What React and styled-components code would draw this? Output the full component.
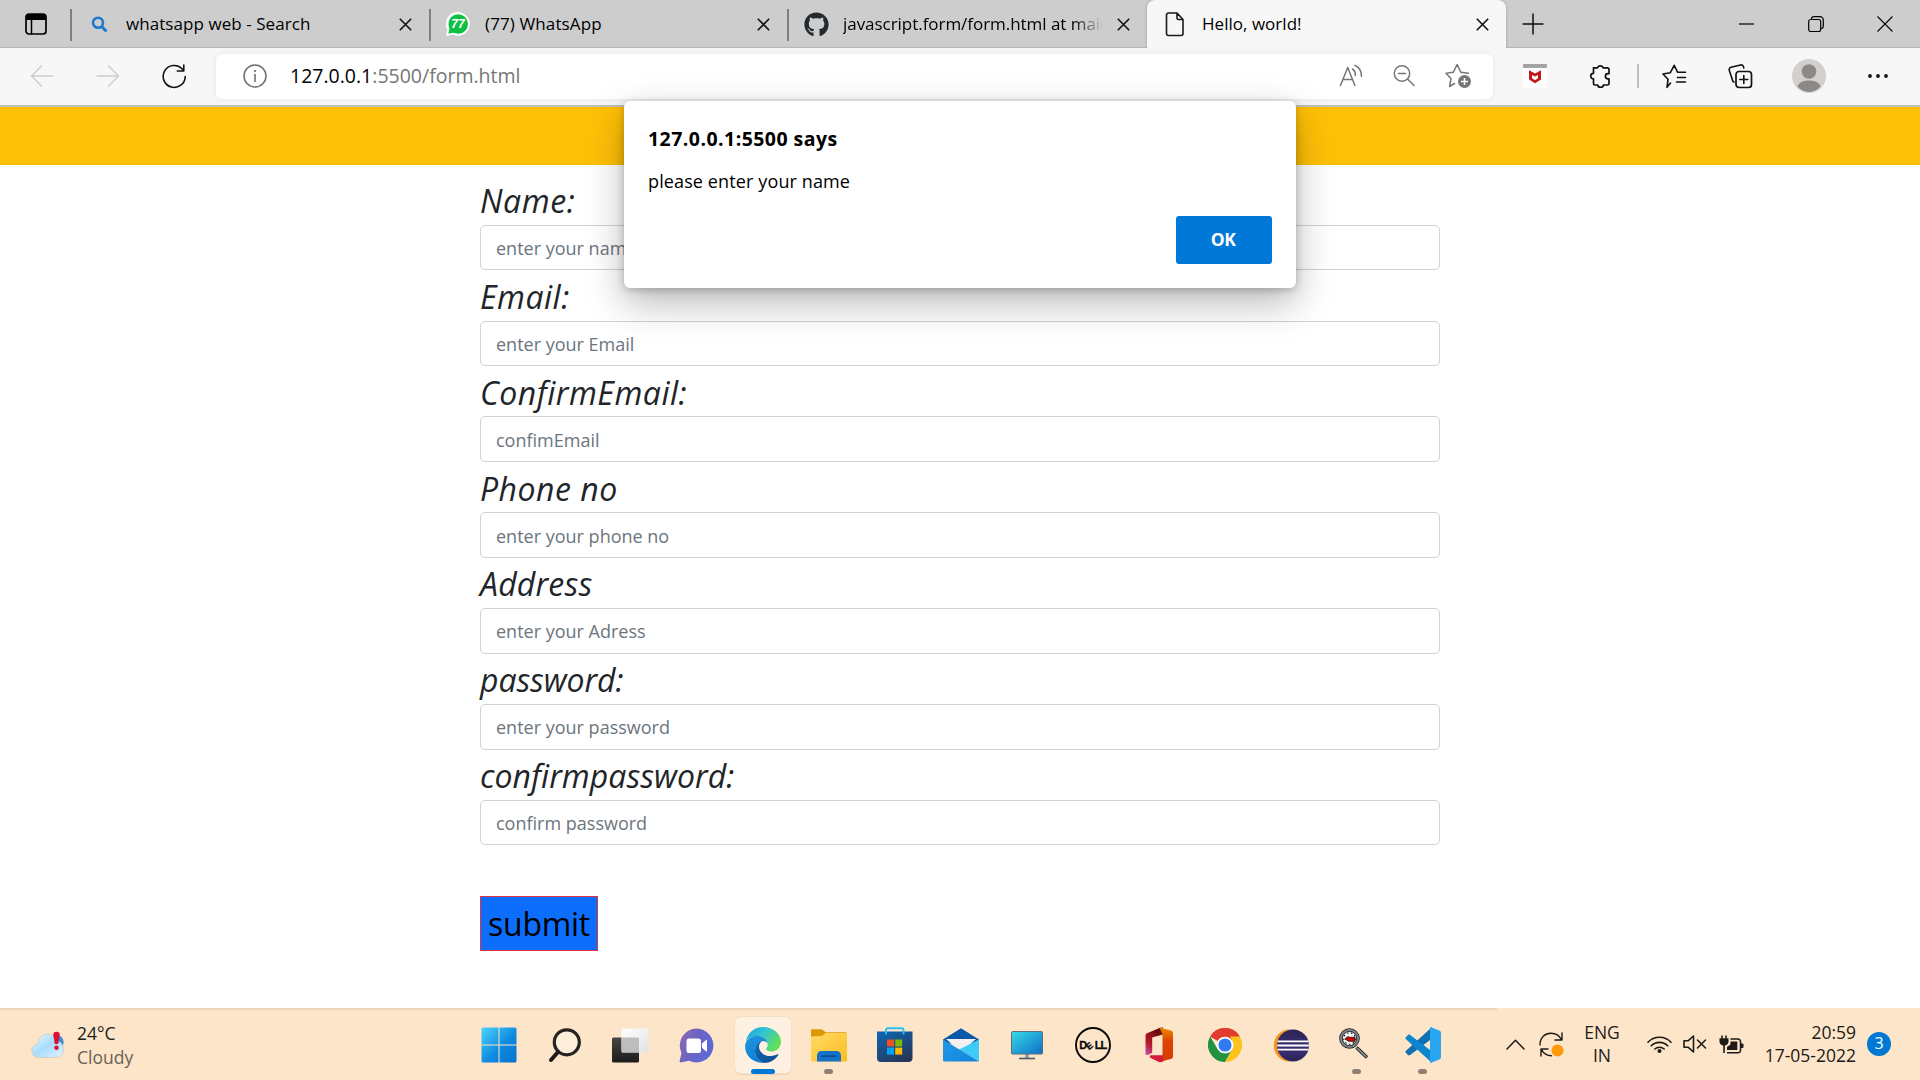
import React from "react";
import styled, { createGlobalStyle, css } from "styled-components";
import { FaGithub } from "react-icons/fa";

const UI = `"Open Sans", "Noto Sans", sans-serif`;

const GlobalStyle = createGlobalStyle`
  *, *::before, *::after { box-sizing: border-box; }
  body { margin: 0; background: #fff; font-family: ${UI}; color: #000; overflow: hidden; }
  svg { display: block; flex: none; }
`;

const Screen = styled.div`
  width: 1920px;
  height: 1080px;
  display: flex;
  flex-direction: column;
  overflow: hidden;
`;

/* ---------- tab strip ---------- */
const TabStrip = styled.header`
  height: 48px;
  flex: none;
  display: flex;
  background: #cdcdcd;
  box-shadow: inset 0 -2px 1px -1px #b4b4b4;
`;
const TabActions = styled.div`
  width: 70px;
  display: flex;
  align-items: center;
  padding-left: 25px;
`;
const Tab = styled.div`
  width: ${(p) => p.$width}px;
  height: 48px;
  display: flex;
  align-items: center;
  padding: 0 12px 0 15px;
  border-left: 1px solid transparent;
  ${(p) =>
    p.$active
      ? css`
          background: #f7f7f7;
          border-radius: 8px 8px 0 0;
          box-shadow: 0 0 3px rgba(0, 0, 0, 0.25);
          clip-path: inset(0 -4px 0 -4px);
        `
      : css`
          border-image: linear-gradient(transparent 10px, #7f7f7f 10px, #7f7f7f 40px, transparent 40px) 1;
          border-width: 0 0 0 2px;
          border-style: solid;
        `}
`;
const TabIcon = styled.span`
  width: 24px;
  height: 24px;
  display: grid;
  place-items: center;
`;
const TabTitle = styled.span`
  flex: 1;
  margin-left: 15px;
  padding-bottom: 1px;
  font-size: 17px;
  line-height: 24px;
  letter-spacing: ${(p) => p.$ls || 0}px;
  white-space: nowrap;
  overflow: hidden;
  margin-right: 8px;
  ${(p) => p.$fade && css`mask-image: linear-gradient(90deg, #000 calc(100% - 30px), transparent);`}
`;
const CloseButton = styled.button`
  width: 24px;
  height: 24px;
  padding: 1px 0 0;
  border: 0;
  background: none;
  display: grid;
  place-items: center;
`;
const NewTab = styled.div`
  width: 54px;
  display: grid;
  place-items: center;
`;
const WindowControls = styled.div`
  margin-left: auto;
  display: flex;
  padding-right: 1px;
`;
const WindowButton = styled.div`
  width: 69px;
  display: grid;
  place-items: center;
  padding-bottom: 1px;
`;

/* ---------- toolbar ---------- */
const Toolbar = styled.div`
  height: 59px;
  flex: none;
  display: flex;
  align-items: center;
  padding: 1px 6px 2px 30px;
  background: #f7f7f7;
  border-bottom: 2px solid #bdbdbd;
`;
const NavButtons = styled.div`
  display: flex;
  gap: 42px;
  margin-right: 29px;
`;
const AddressBar = styled.div`
  width: 1277px;
  height: 45px;
  display: flex;
  align-items: center;
  padding: 0 8px 0 27px;
  background: #fff;
  border-radius: 6px;
  box-shadow: 0 0 6px rgba(0, 0, 0, 0.07);
`;
const Url = styled.span`
  flex: 1;
  margin-left: 23px;
  font-size: 19.5px;
  line-height: 28px;
  color: #767676;
  white-space: nowrap;
  b { font-weight: 400; color: #000; }
`;
const AddressAction = styled.span`
  width: 53.7px;
  display: grid;
  place-items: center;
`;
const ToolbarActions = styled.div`
  display: flex;
  align-items: center;
  margin-left: 9px;
`;
const ToolbarAction = styled.span`
  width: ${(p) => p.$w || 66}px;
  display: grid;
  place-items: center;
`;
const ToolbarDivider = styled.i`
  width: 2px;
  height: 24px;
  background: #bdbdbd;
  margin: 0 2px 0 3px;
`;

/* ---------- page ---------- */
const Page = styled.main`
  flex: 1;
  background: #fff;
`;
const Banner = styled.div`
  height: 58px;
  background: #ffc107;
`;
const Form = styled.form`
  width: 960px;
  margin: 0 auto;
  padding-top: 9.64px;
`;
const Field = styled.div`
  height: 95.84px;
`;
const Label = styled.label`
  display: block;
  height: 50.16px;
  padding-top: 1.5px;
  font: italic 400 32px/50px ${UI};
  letter-spacing: ${(p) => p.$ls || 0}px;
  color: #212529;
`;
const Input = styled.input`
  display: block;
  width: 100%;
  height: 45.68px;
  padding: 1px 14px 0 15px;
  border: 1px solid #ced4da;
  border-radius: 5px;
  outline: 0;
  font: 400 18px/28px ${UI};
  &::placeholder { color: #6c757d; opacity: 1; }
`;
const Submit = styled.button`
  display: block;
  width: 118px;
  height: 55px;
  margin-top: 50.5px;
  padding: 2px 0 0;
  border: 1px solid #dc3545;
  background: #0d6efd;
  font: 400 32px/50px ${UI};
  letter-spacing: -0.3px;
  color: #000;
`;

/* ---------- alert ---------- */
const Dialog = styled.section`
  position: absolute;
  left: 624px;
  top: 101px;
  width: 672px;
  height: 187px;
  display: flex;
  flex-direction: column;
  padding: 24px 24px 24px 24px;
  background: #fff;
  border-radius: 6px;
  box-shadow: 0 15px 38px rgba(0, 0, 0, 0.28), 0 2px 8px rgba(0, 0, 0, 0.22);
`;
const DialogTitle = styled.h1`
  margin: 0 0 14px;
  font-size: 19.5px;
  font-weight: 700;
  line-height: 28px;
  letter-spacing: 0.45px;
`;
const DialogText = styled.p`
  margin: 0;
  font-size: 18px;
  line-height: 28px;
  letter-spacing: 0.12px;
`;
const DialogButton = styled.button`
  align-self: flex-end;
  margin-top: auto;
  width: 96px;
  height: 48px;
  padding: 0 2px 2px 0;
  border: 0;
  border-radius: 3px;
  background: #0078d7;
  color: #fff;
  font: 700 17.5px/24px ${UI};
  letter-spacing: -0.6px;
`;

/* ---------- taskbar ---------- */
const Taskbar = styled.footer`
  height: 72px;
  flex: none;
  display: flex;
  background: linear-gradient(90deg, #ecd5bb 1497px, transparent 1497px) 0 0 / 100% 2px no-repeat #fde5c9;
`;
const Weather = styled.div`
  width: 465.5px;
  display: flex;
  align-items: center;
  gap: 12px;
  padding: 2px 0 0 31px;
`;
const WeatherText = styled.div`
  font-size: 17.5px;
  line-height: 24px;
  color: #201d19;
`;
const Line = styled.div`
  letter-spacing: ${(p) => p.$ls || 0}px;
  color: ${(p) => p.$color || "inherit"};
`;
const Apps = styled.div`
  display: flex;
`;
const AppCell = styled.div`
  width: 66px;
  height: 72px;
  display: flex;
  flex-direction: column;
  align-items: center;
  padding-top: 9px;
`;
const AppTile = styled.div`
  width: 56px;
  height: 56px;
  display: grid;
  place-items: center;
  border-radius: 6px;
  ${(p) => p.$nudge && css`padding: ${p.$nudge};`}
  ${(p) => p.$active && css`
    background: #fef1e2;
    box-shadow: 0 0 0 1px #f6dfc5, 0 2px 0 #ecd4b8;
  `}
`;
const Indicator = styled.i`
  width: ${(p) => (p.$active ? 24 : 9)}px;
  height: 5px;
  margin-top: -4px;
  border-radius: 3px;
  background: ${(p) => (p.$active ? "#0078d4" : "#8e8172")};
  z-index: 1;
`;
const Tray = styled.div`
  margin-left: auto;
  display: flex;
  align-items: center;
  color: #1d1a17;
  padding-right: 29px;
`;
const TrayText = styled.div`
  width: ${(p) => p.$w}px;
  margin: ${(p) => p.$m};
  padding-bottom: 1px;
  font-size: 17.5px;
  line-height: 22.5px;
  text-align: ${(p) => p.$align || "center"};
  white-space: nowrap;
`;
const TrayIcon = styled.span`
  margin-right: ${(p) => p.$gap}px;
`;
const Badge = styled.span`
  width: 24px;
  height: 24px;
  border-radius: 50%;
  background: #0078d4;
  color: #fff;
  font-size: 16px;
  line-height: 23px;
  text-align: center;
`;

/* ---------- icons ---------- */
const Svg = ({ w = 24, h = w, vb, children, ...r }) => (
  <svg width={w} height={h} viewBox={vb || `0 0 ${w} ${h}`} fill="none" stroke="none" {...r}>
    {children}
  </svg>
);
const stroke = (c, sw = 1.5) => ({ stroke: c, strokeWidth: sw, strokeLinecap: "round", strokeLinejoin: "round" });

const CrossIcon = () => (
  <Svg w={13}><path d="M.8.8l11.4 11.4M12.2.8L.8 12.2" stroke="#111" strokeWidth="1.6" /></Svg>
);
const PanelIcon = () => (
  <Svg w={22}>
    <rect x="1" y="1" width="20" height="20" rx="3" {...stroke("#000", 1.7)} />
    <path d="M1 7V4a3 3 0 013-3h14a3 3 0 013 3v3z" fill="#000" />
    <path d="M6.5 6v15" {...stroke("#000", 1.5)} />
  </Svg>
);
const BingSearchIcon = () => (
  <Svg w={17}>
    <circle cx="7" cy="6.7" r="5" stroke="#1c78cf" strokeWidth="2.6" />
    <path d="M10.7 10.6l4.8 4.9" stroke="#1c78cf" strokeWidth="2.9" />
  </Svg>
);
const WhatsAppIcon = () => (
  <Svg w={24}>
    <path d="M12.2 0A11.7 11.7 0 11 7 22.600L0 24l1.500-6.400A11.700 11.700 0 0112.200 0z" fill="#fff" />
    <circle cx="12.200" cy="12" r="11.500" fill="#fff" />
    <circle cx="12.200" cy="12" r="9.800" fill="#0ec143" />
    <path d="M2.300 21.800l1.400-6 4.600 4.600z" fill="#0ec143" />
    <text x="12" y="16.300" textAnchor="middle" fontSize="12" fontWeight="700" fontStyle="italic" fontFamily="Liberation Sans, sans-serif" fill="#fff">77</text>
  </Svg>
);
const FileIcon = () => (
  <Svg w={20} h={25}>
    <path d="M3.500 1h8.500l6 6.500V21.500a2 2 0 01-2 2h-12.500a2 2 0 01-2-2V3a2 2 0 012-2zM12 1v5a1.500 1.500 0 001.500 1.500H18" {...stroke("#1a1a1a", 1.600)} />
  </Svg>
);
const BackIcon = () => <Svg w={24}><path d="M23 12H1.500M11.500 2L1.500 12l10 10" {...stroke("#cdcdcd", 1.500)} /></Svg>;
const ForwardIcon = () => <Svg w={24}><path d="M1 12h21.500M12.500 2l10 10-10 10" {...stroke("#cdcdcd", 1.500)} /></Svg>;
const ReloadIcon = () => (
  <Svg w={25}><path d="M23.200 12.500A11 11 0 1120 4.700l1.500 1.800M21.800 1v6h-6.500" {...stroke("#111", 1.600)} /></Svg>
);
const InfoIcon = () => (
  <Svg w={24}><circle cx="12" cy="12" r="11" {...stroke("#6e6e6e", 1.500)} /><path d="M12 10.500V17.500" {...stroke("#6e6e6e", 1.600)} /><circle cx="12" cy="7" r="1.100" fill="#6e6e6e" /></Svg>
);
const ReadAloudIcon = () => (
  <Svg w={24}>
    <path d="M1.500 21.500L8.700 3.500l7.200 18M4 15.500h9.500M13.500 5c2 1.200 3 3.500 2.800 6.500M16 1.500c4.500 1.800 6.500 5.500 6.500 11" {...stroke("#767676", 1.500)} />
  </Svg>
);
const ZoomOutIcon = () => (
  <Svg w={22}><circle cx="9" cy="8.500" r="7.700" {...stroke("#767676", 1.500)} /><path d="M5.500 8.500h7M14.600 14l6.400 6.500" {...stroke("#767676", 1.500)} /></Svg>
);
const AddFavoriteIcon = () => (
  <Svg w={26}>
    <path d="M9.500 20.500L4.600 23.500 6 15.500 1 10.300l7.200-1L12.200 1.500l3.600 7.800 7.500 1" {...stroke("#767676", 1.500)} />
    <circle cx="19.500" cy="18.500" r="6.500" fill="#767676" />
    <path d="M19.500 15v7M16 18.500h7" stroke="#fff" strokeWidth="1.500" />
  </Svg>
);
const ShieldExtensionIcon = () => (
  <Svg w={24}>
    <rect width="24" height="24" fill="#fff" />
    <rect width="24" height="4" rx="1" fill="#a3a3a3" />
    <path d="M6 6.200l6 3.300 6-3.300v9.300l-6 3.800-6-3.800z" fill="#c01818" />
    <path d="M9 11l3 1.600L15 11v3.300l-3 1.900-3-1.900z" fill="#fff" />
  </Svg>
);
const PuzzleIcon = () => (
  <Svg w={24}>
    <path d="M4.500 3.800h4a3 3 0 015.600 0h4.400a1.500 1.500 0 011.500 1.500v4.400h-1a2.600 2.600 0 000 5.200h1v4.600a1.500 1.500 0 01-1.500 1.500h-4a3 3 0 01-5.900 0H6a1.500 1.500 0 01-1.500-1.500v-4.600a2.800 2.800 0 010-5.600z" {...stroke("#111", 1.700)} />
  </Svg>
);
const FavoritesIcon = () => (
  <Svg w={25}>
    <path d="M8.500 19L5 23.300l1-8L1 10l7.200-1.200 4-7.500 3.500 7h7.800M15.500 13.500h8M14.500 18h9" {...stroke("#111", 1.600)} />
  </Svg>
);
const CollectionsIcon = () => (
  <Svg w={25}>
    <rect x="8" y="7.500" width="15.500" height="16" rx="3" {...stroke("#111", 1.700)} />
    <path d="M15.800 11.500v8M11.800 15.500h8M5 17.500L1.300 6.500a2.500 2.500 0 011.700-3.200L12.500 1a2.500 2.500 0 013 1.800l.3 1.200M5 17.500l1 .5" {...stroke("#111", 1.600)} />
  </Svg>
);
const AvatarIcon = () => (
  <Svg w={34}>
    <circle cx="17" cy="17" r="17" fill="#d2d0cd" />
    <circle cx="17" cy="12.500" r="7.300" fill="#8d8884" />
    <path d="M5.500 27.500C7 23.500 11 21.500 17 21.500s10 2 11.500 6A16 16 0 0117 33a16 16 0 01-11.500-5.500z" fill="#8d8884" />
  </Svg>
);
const DotsIcon = () => (
  <Svg w={20} h={4}><circle cx="2" cy="2" r="1.900" fill="#111" /><circle cx="10" cy="2" r="1.900" fill="#111" /><circle cx="18" cy="2" r="1.900" fill="#111" /></Svg>
);

const WeatherIcon = () => (
  <Svg w={34} h={28}>
    <defs><linearGradient id="cl" x1="0" y1="0" x2="1" y2="1"><stop offset="0" stopColor="#eafaff" /><stop offset=".5" stopColor="#a9dcfb" /><stop offset="1" stopColor="#e4f3fc" /></linearGradient></defs>
    <circle cx="25.500" cy="11" r="7.200" fill="#3d8fd6" />
    <path d="M7 26.500a6.800 6.800 0 01-.5-13.500C7.500 6.500 11 3 16.500 3c4.500 0 7.500 2.700 8.800 7 4.200.3 7.200 3.500 7.200 8.300s-3 8.200-7 8.200z" fill="url(#cl)" stroke="#cdc4b8" strokeWidth=".7" />
    <path d="M22.300 4a3.200 3.200 0 016.400 0l-1.500 9h-3.400z" fill="#dc0f37" /><circle cx="25.500" cy="16.800" r="2.200" fill="#dc0f37" />
  </Svg>
);
const WindowsIcon = () => (
  <Svg w={36}>
    <defs><linearGradient id="wn" x1="0" y1="0" x2="36" y2="36" gradientUnits="userSpaceOnUse"><stop stopColor="#4fd5fd" /><stop offset=".55" stopColor="#0f8be0" /><stop offset="1" stopColor="#0471ce" /></linearGradient></defs>
    <path d="M2 .5h15.500v17H.5V2A1.500 1.500 0 012 .5zM18.500.500H34A1.500 1.500 0 0135.500 2v15.500h-17zM.5 18.500h17v17H2A1.500 1.500 0 01.5 34zM18.500 18.500h17V34a1.500 1.500 0 01-1.500 1.500H18.500z" fill="url(#wn)" />
  </Svg>
);
const SearchIcon = () => (
  <Svg w={34} h={36}>
    <circle cx="18.800" cy="15.300" r="12.500" fill="#fdeedc" stroke="#262421" strokeWidth="3.200" />
    <path d="M10 25l-7 8" stroke="#1c1b19" strokeWidth="4" strokeLinecap="round" />
  </Svg>
);
const TaskViewIcon = () => (
  <Svg w={37} h={35}>
    <defs>
      <linearGradient id="tv" x1="0" y1="0" x2="0" y2="1"><stop stopColor="#484642" /><stop offset="1" stopColor="#1c1c1c" /></linearGradient>
      <linearGradient id="tw" x1="0" y1="0" x2="1" y2="1"><stop stopColor="#fff" /><stop offset="1" stopColor="#e2e2e2" /></linearGradient>
    </defs>
    <rect x="0" y="9.500" width="27" height="25" rx="1.500" fill="url(#tv)" />
    <rect x="9.500" y=".5" width="27" height="24" rx="1.500" fill="url(#tw)" />
    <path d="M9.500 9.500H27v15H11a1.500 1.500 0 01-1.500-1.500z" fill="#bdbdbd" />
  </Svg>
);
const ChatIcon = () => (
  <Svg w={35}>
    <defs><linearGradient id="ct" x1="0" y1="0.100" x2="1" y2=".6"><stop stopColor="#8d6bb0" /><stop offset=".5" stopColor="#6b63c4" /><stop offset="1" stopColor="#5c6ad8" /></linearGradient></defs>
    <path d="M17.500.5a17 17 0 11-7.500 32.300L1.500 34.500.5 33.500 2.500 25A17 17 0 0117.500.5z" fill="url(#ct)" />
    <rect x="7.500" y="10.500" width="14.500" height="14.500" rx="2.500" fill="#fff" /><path d="M23.500 15.500l4-3.300v11l-4-3.300z" fill="#fff" stroke="#fff" strokeLinejoin="round" />
  </Svg>
);
const EdgeIcon = () => (
  <Svg w={36}>
    <defs>
      <linearGradient id="e1" x1="0" y1="0" x2="1" y2=".5"><stop stopColor="#1a9fd8" /><stop offset=".5" stopColor="#32c4d4" /><stop offset="1" stopColor="#62e05a" /></linearGradient>
      <linearGradient id="e2" x1="0" y1="0" x2=".4" y2="1"><stop stopColor="#2197dc" /><stop offset="1" stopColor="#0b7fd8" /></linearGradient>
      <linearGradient id="e3" x1="0" y1="0" x2="1" y2="1"><stop stopColor="#0d6dbd" /><stop offset="1" stopColor="#114a8b" /></linearGradient>
    </defs>
    <path d="M.8 14.500C2.600 5.500 9.500 0 18 0c10.500 0 18 7.200 18 14.800 0 5.800-4.300 9.700-9.300 9.700-3.500 0-5.500-1.200-5.500-2.500 0-1 1.500-1.800 1.500-4.300C22.700 12.500 18 9.500 12.500 9 7.500 8.700 3 10.500.8 14.500z" fill="url(#e1)" />
    <path d="M.1 19C.5 12.500 6 8.500 12 8.700c5.500.2 10.300 3.600 10.600 7.800-1-1.800-2.800-2.700-5-2.500-4 .5-7.600 4.500-7.600 10 0 5.500 3.500 10 8.500 12C8.500 36.300-.4 29 .1 19z" fill="url(#e2)" />
    <path d="M17.500 14c-2.600 1.500-3.500 3.800-3.500 5.800 0 5.200 5 9.200 11 9.200 4 0 6.300-1.300 7.500-1.800.8-.3 1.100.2.700.8C30.500 32.500 25.500 36 18.500 36 13.500 34 10 29.500 10 24c0-5.500 3.500-9.500 7.500-10z" fill="url(#e3)" />
  </Svg>
);
const ExplorerIcon = () => (
  <Svg w={36} h={33}>
    <defs><linearGradient id="fo" x1="0" y1="0" x2="1" y2="1"><stop stopColor="#ffdb67" /><stop offset="1" stopColor="#fbbd20" /></linearGradient></defs>
    <path d="M0 1.500A1.200 1.200 0 011.200.3h9.500l4 3H34a2 2 0 012 2V8H0z" fill="#d99a06" />
    <path d="M0 7.500L11 7l4-3h19.500A1.500 1.500 0 0136 5.500V31a1.500 1.500 0 01-1.500 1.500h-33A1.500 1.500 0 010 31z" fill="url(#fo)" />
    <path d="M6 32.500v-6A4.500 4.500 0 0110.500 22h15a4.500 4.500 0 014.500 4.500v6z" fill="#1471c8" /><path d="M11 27.200h14" stroke="#0b4d93" strokeWidth="1.700" strokeLinecap="round" />
  </Svg>
);
const StoreIcon = () => (
  <Svg w={36}>
    <defs><linearGradient id="st" x1="0" y1="0" x2=".6" y2="1"><stop stopColor="#0a68b8" /><stop offset="1" stopColor="#27385c" /></linearGradient></defs>
    <path d="M0 4.500h35.500V31a4 4 0 01-4 4H4a4 4 0 01-4-4z" fill="url(#st)" />
    <path d="M9 7.500V3a1.800 1.800 0 011.800-1.800h14A1.800 1.800 0 0126.500 3v4.500" stroke="#25c2f2" strokeWidth="1.900" />
    <path d="M10 12.500h7v7h-7z" fill="#f25022" /><path d="M18.200 12.500h7v7h-7z" fill="#7fba00" /><path d="M10 20.600h7v7h-7z" fill="#00a4ef" /><path d="M18.200 20.600h7v7h-7z" fill="#ffb900" />
  </Svg>
);
const MailIcon = () => (
  <Svg w={36} h={34}>
    <defs><linearGradient id="ml" x1="0" y1="0" x2="1" y2="1"><stop stopColor="#1e9be6" /><stop offset="1" stopColor="#1683dc" /></linearGradient></defs>
    <path d="M0 11.500L18 .3l18 11.200v4H0z" fill="#0a59a8" /><path d="M3 11h30l-15 13z" fill="#f3f1f0" />
    <path d="M36 11.500V32a1.500 1.500 0 01-.6 1.200L16 21.500z" fill="#3fcbf8" />
    <path d="M0 11.500l36 22H1.500A1.500 1.500 0 010 32z" fill="url(#ml)" />
  </Svg>
);
const MonitorIcon = () => (
  <Svg w={32} h={29}>
    <defs><linearGradient id="mn" x1="0" y1="0" x2="1" y2="1"><stop stopColor="#36dbe8" /><stop offset="1" stopColor="#0d6fc6" /></linearGradient></defs>
    <path d="M14 23h4v4h-4z" fill="#9aa1a8" /><path d="M8 27.500h16" stroke="#4e5a66" strokeWidth="1.600" />
    <rect x=".5" y=".5" width="31" height="22.500" rx="1" fill="url(#mn)" stroke="#5e6d78" />
  </Svg>
);
const DellIcon = () => (
  <Svg w={36}>
    <circle cx="18" cy="18" r="17" stroke="#0a0a0a" strokeWidth="1.900" />
    <g fontFamily="Liberation Sans, sans-serif" fontSize="11" fontWeight="700" fill="#0a0a0a" stroke="#0a0a0a" strokeWidth=".3">
      <text x="4.200" y="22">D</text><text x="19.700" y="22">L</text><text x="25.500" y="22">L</text>
      <text transform="translate(14 23.300) rotate(-38)" fontSize="9">E</text>
    </g>
  </Svg>
);
const OfficeIcon = () => (
  <Svg w={28} h={36}>
    <defs>
      <linearGradient id="o1" x1="0" y1="1" x2=".6" y2="0"><stop stopColor="#c35cb0" /><stop offset=".4" stopColor="#b8182e" /><stop offset="1" stopColor="#620c08" /></linearGradient>
      <linearGradient id="o2" x1="0" y1="0" x2="0" y2="1"><stop stopColor="#f08a00" /><stop offset=".4" stopColor="#dd4206" /><stop offset="1" stopColor="#d83b01" /></linearGradient>
    </defs>
    <path d="M15 .8L1.500 6.500.5 8v18.500c0 1.500 1.500 2 3 1.200l3.700-2V10.500L18 7.500V.5z" fill="url(#o1)" />
    <path d="M14.500.5l3 7v20.500l-3 7 12-3.300A2 2 0 0028 29.800V5.500a2 2 0 00-1.500-1.800z" fill="url(#o2)" />
    <path d="M6 28.200h12v6.500l-3.500.6L5.700 31c-1.500-.8-1.200-2.800.3-2.800z" fill="#d61a3c" />
  </Svg>
);
const ChromeIcon = () => (
  <Svg w={34} vb="0 0 48 48">
    <path d="M24 24L3.200 12A24 24 0 0144.800 12z" fill="#e33b2e" />
    <path d="M24 0a24 24 0 0120.800 12H24a12 12 0 00-10.400 6L3.200 12A24 24 0 0124 0z" fill="#e33b2e" />
    <path d="M3.200 12l10.400 18A12 12 0 0024 36l2-.2L24 48A24 24 0 013.200 12z" fill="#229342" />
    <path d="M13.600 30A12 12 0 0024 36c4 0 8-2 10.400-6L24 48C15 46 9 38 9 30z" fill="#229342" />
    <path d="M44.800 12A24 24 0 0124 48l10.400-18a12 12 0 000-12L31 12z" fill="#fcc31d" />
    <circle cx="24" cy="24" r="11.800" fill="#fff" /><circle cx="24" cy="24" r="9.300" fill="#2f7bf0" />
  </Svg>
);
const EclipseIcon = () => (
  <Svg w={36} h={33}>
    <defs><linearGradient id="ec" x1="0" y1="0" x2="0" y2="1"><stop stopColor="#2b2354" /><stop offset=".6" stopColor="#3b2f78" /><stop offset="1" stopColor="#2a2254" /></linearGradient></defs>
    <path d="M17 .3A16.200 16.200 0 0017 32.700C9 29.500 6 24 6 16.500S9 3.500 17 .3z" fill="#f7941e" />
    <circle cx="20" cy="16.500" r="16" fill="url(#ec)" />
    <path d="M4.500 12.400h31M4.200 16.500h31.600M4.500 20.600h31" stroke="#fff" strokeWidth="1.900" />
  </Svg>
);
const LensIcon = () => (
  <Svg w={30} h={31}>
    <path d="M17.500 19.500L28 29.500" stroke="#222" strokeWidth="3.400" /><path d="M18 20L27.500 29" stroke="#9aa0a4" strokeWidth="1.500" />
    <circle cx="10.500" cy="10.500" r="8.500" fill="#f3f3f3" stroke="#222" strokeWidth="3.600" /><circle cx="10.500" cy="10.500" r="8.500" stroke="#7d8488" strokeWidth="2" />
    <circle cx="10.500" cy="10.500" r="5.800" stroke="#222" strokeWidth="1.200" strokeDasharray="1.500 2.500" />
    <path d="M6 11l3-2.500 1 .8h6v4H9.500z" fill="#d40000" stroke="#111" strokeWidth=".8" />
  </Svg>
);
const CodeIcon = () => (
  <Svg w={36}>
    <path d="M26.500.5L1 23.800a1.500 1.500 0 000 2.200l2 2.100c.7.600 1.500.6 2.200 0L27 11.500z" fill="#0f70b3" />
    <path d="M26.500 35.500L1 12.200A1.500 1.500 0 011 10L3 7.900c.7-.6 1.500-.6 2.200 0L27 24.500z" fill="#0e86cf" />
    <path d="M26.200.3l8.500 3.400A2 2 0 0136 5.500v25a2 2 0 01-1.300 1.800l-8.500 3.400c-.6.200-1 0-1.200-.4l2-2V2.700l-2-2c.2-.4.600-.6 1.200-.4z" fill="#2aa5f2" />
    <path d="M25 .7L27 .3v35l-2 .3z" fill="#2aa5f2" />
  </Svg>
);

const ChevronIcon = () => <Svg w={19} h={11}><path d="M1 10l8.500-8.700L18 10" {...stroke("#1d1a17", 1.500)} /></Svg>;
const SyncIcon = () => (
  <Svg w={25}>
    <path d="M1 13C1 5.500 6 1.200 12 1.200c4.500 0 8.500 2.300 10.500 6.500M23 1v7h-7M2 24v-7h7M2.500 17.500c2 4 5.500 6.200 10 6.200" {...stroke("#1d1a17", 1.400)} />
    <circle cx="18.500" cy="18.500" r="6" fill="#ff9a0a" />
  </Svg>
);
const WifiIcon = () => (
  <Svg w={25} h={18}>
    <path d="M1 7.200a16 16 0 0123 0M4.300 10.800a11.500 11.500 0 0116.400 0M7.800 14a7 7 0 019.400 0" {...stroke("#1d1a17", 1.600)} />
    <circle cx="12.500" cy="16" r="2" fill="#1d1a17" />
  </Svg>
);
const MuteIcon = () => (
  <Svg w={24} h={18}>
    <path d="M1 5.800h4L10.500 1v16L5 12.200H1z" {...stroke("#1d1a17", 1.600)} /><path d="M14.500 5l8 8M22.500 5l-8 8" {...stroke("#1d1a17", 1.600)} />
  </Svg>
);
const BatteryIcon = () => (
  <Svg w={25} h={19}>
    <path d="M3 .5v3M7 .5v3" stroke="#1d1a17" strokeWidth="1.600" /><path d="M.5 3.300h9V7a4 4 0 01-3 3.500h-3A4 4 0 01.500 7z" fill="#1d1a17" />
    <path d="M5 10v8" stroke="#1d1a17" strokeWidth="1.600" />
    <path d="M11.500 4H19a2.500 2.500 0 012.500 2.500v9A2.500 2.500 0 0119 17.700H8" stroke="#1d1a17" strokeWidth="1.500" />
    <path d="M11.500 6.500h6.800v8.500H8v-3l3.500-2.500zM22 8.500h1.500a1 1 0 011 1v2.500a1 1 0 01-1 1H22z" fill="#1d1a17" />
  </Svg>
);

/* ---------- data ---------- */
const tabs = [
  { title: "whatsapp web - Search", icon: <BingSearchIcon />, width: 359, ls: 0.06 },
  { title: "(77) WhatsApp", icon: <WhatsAppIcon />, width: 358, ls: 0.12 },
  { title: "javascript.form/form.html at main", icon: <FaGithub size={25} color="#24292f" />, width: 360, ls: -0.04, fade: true },
  { title: "Hello, world!", icon: <FileIcon />, width: 359, ls: 0.03, active: true },
];
const fields = [
  { label: "Name:", hint: "enter your name", ls: 0.6 },
  { label: "Email:", hint: "enter your Email", ls: 0.5 },
  { label: "ConfirmEmail:", hint: "confimEmail", ls: 0.5 },
  { label: "Phone no", hint: "enter your phone no", ls: 0.5 },
  { label: "Address", hint: "enter your Adress", ls: 0.2 },
  { label: "password:", hint: "enter your password", ls: -0.1 },
  { label: "confirmpassword:", hint: "confirm password", ls: 0.03 },
];
const apps = [
  { icon: <WindowsIcon /> }, { icon: <SearchIcon /> }, { icon: <TaskViewIcon /> }, { icon: <ChatIcon />, nudge: "0 1px 0 0" },
  { icon: <EdgeIcon />, active: true }, { icon: <ExplorerIcon />, running: true }, { icon: <StoreIcon /> },
  { icon: <MailIcon /> }, { icon: <MonitorIcon /> }, { icon: <DellIcon /> }, { icon: <OfficeIcon /> },
  { icon: <ChromeIcon /> }, { icon: <EclipseIcon /> }, { icon: <LensIcon />, running: true, nudge: "0 5px 4px 0" }, { icon: <CodeIcon />, running: true },
];

export default function App() {
  return (
    <Screen>
      <GlobalStyle />
      <TabStrip>
        <TabActions><PanelIcon /></TabActions>
        {tabs.map((t) => (
          <Tab key={t.title} $active={t.active} $width={t.width}>
            <TabIcon>{t.icon}</TabIcon>
            <TabTitle $ls={t.ls} $fade={t.fade}>{t.title}</TabTitle>
            <CloseButton><CrossIcon /></CloseButton>
          </Tab>
        ))}
        <NewTab><Svg w={22}><path d="M11 .5v21M.5 11h21" stroke="#111" strokeWidth="1.500" /></Svg></NewTab>
        <WindowControls>
          <WindowButton><Svg w={15} h={2}><path d="M0 1h15" stroke="#000" strokeWidth="1.200" /></Svg></WindowButton>
          <WindowButton><Svg w={16}><rect x=".7" y="3.500" width="12" height="12" rx="2" stroke="#000" strokeWidth="1.200" /><path d="M3.500 3C3.500 1.500 4.500.7 6 .7h6a3.300 3.300 0 013.300 3.300v6c0 1.500-.8 2.500-2.300 2.500" stroke="#000" strokeWidth="1.200" /></Svg></WindowButton>
          <WindowButton><Svg w={16}><path d="M.5.5l15 15M15.500.5l-15 15" stroke="#000" strokeWidth="1.100" /></Svg></WindowButton>
        </WindowControls>
      </TabStrip>
      <Toolbar>
        <NavButtons><BackIcon /><ForwardIcon /><ReloadIcon /></NavButtons>
        <AddressBar>
          <InfoIcon />
          <Url><b>127.0.0.1</b>:5500/form.html</Url>
          <AddressAction><ReadAloudIcon /></AddressAction>
          <AddressAction><ZoomOutIcon /></AddressAction>
          <AddressAction><AddFavoriteIcon /></AddressAction>
        </AddressBar>
        <ToolbarActions>
          <ToolbarAction><ShieldExtensionIcon /></ToolbarAction>
          <ToolbarAction><PuzzleIcon /></ToolbarAction>
          <ToolbarDivider />
          <ToolbarAction><FavoritesIcon /></ToolbarAction>
          <ToolbarAction><CollectionsIcon /></ToolbarAction>
          <ToolbarAction $w={71}><AvatarIcon /></ToolbarAction>
          <ToolbarAction $w={67}><DotsIcon /></ToolbarAction>
        </ToolbarActions>
      </Toolbar>
      <Page>
        <Banner />
        <Form>
          {fields.map((f) => (
            <Field key={f.label}>
              <Label $ls={f.ls}>{f.label}</Label>
              <Input placeholder={f.hint} />
            </Field>
          ))}
          <Submit type="button">submit</Submit>
        </Form>
      </Page>
      <Taskbar>
        <Weather>
          <WeatherIcon />
          <WeatherText><Line>24°C</Line><Line $color="#6b6155">Cloudy</Line></WeatherText>
        </Weather>
        <Apps>
          {apps.map((a, i) => (
            <AppCell key={i}>
              <AppTile $active={a.active} $nudge={a.nudge}>{a.icon}</AppTile>
              {(a.active || a.running) && <Indicator $active={a.active} />}
            </AppCell>
          ))}
        </Apps>
        <Tray>
          <TrayIcon $gap={14}><ChevronIcon /></TrayIcon>
          <TrayIcon $gap={0}><SyncIcon /></TrayIcon>
          <TrayText $w={40} $m="0 25px 0 18px"><Line>ENG</Line><Line>IN</Line></TrayText>
          <TrayIcon $gap={11}><WifiIcon /></TrayIcon>
          <TrayIcon $gap={12}><MuteIcon /></TrayIcon>
          <TrayIcon $gap={0}><BatteryIcon /></TrayIcon>
          <TrayText $w={92} $m="0 11px 0 20px" $align="right"><Line>20:59</Line><Line>17-05-2022</Line></TrayText>
          <Badge>3</Badge>
        </Tray>
      </Taskbar>
      <Dialog>
        <DialogTitle>127.0.0.1:5500 says</DialogTitle>
        <DialogText>please enter your name</DialogText>
        <DialogButton>OK</DialogButton>
      </Dialog>
    </Screen>
  );
}
